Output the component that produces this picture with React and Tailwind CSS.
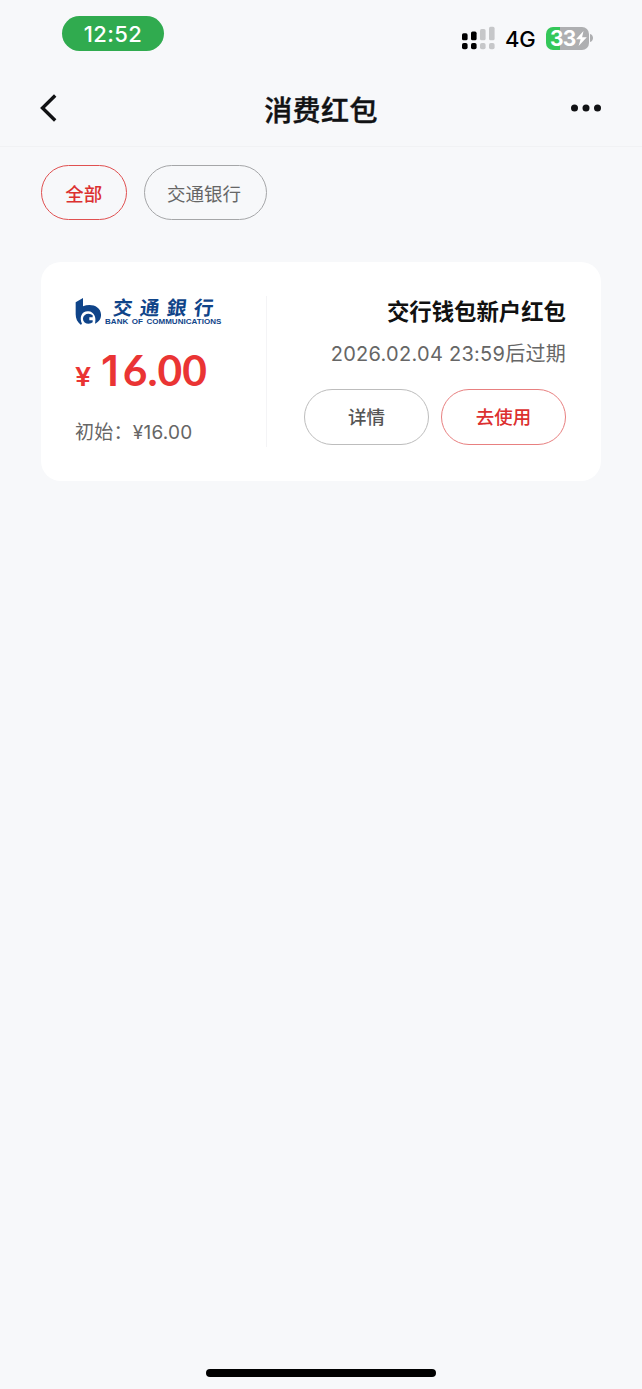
function StatusBar() {
  return (
    <div className="flex h-[73px] items-start justify-between pl-[62px] pr-[49px]">
      <div className="mt-4 flex h-[35px] w-[102px] items-center justify-center rounded-full bg-[#30ab4f] text-[22px] font-medium leading-none tracking-[0.4px] text-white">
        12:52
      </div>
      <div className="mt-[26px] flex h-6 items-center">
        <svg width="33" height="24" viewBox="0 0 33 24">
          <rect x="0" y="7.3" width="5.6" height="7" rx="1.6" />
          <rect x="9" y="5.6" width="5.6" height="8.7" rx="1.6" />
          <rect x="18" y="3.1" width="5.6" height="11.2" rx="1.6" fill="#c6c7c9" />
          <rect x="27" y="0.8" width="5.6" height="13.5" rx="1.6" fill="#c6c7c9" />
          <rect x="0" y="17" width="5.6" height="6.2" rx="1.8" />
          <rect x="9" y="17" width="5.6" height="6.2" rx="1.8" />
          <rect x="18" y="17" width="5.6" height="6.2" rx="1.8" fill="#c6c7c9" />
          <rect x="27" y="17" width="5.6" height="6.2" rx="1.8" fill="#c6c7c9" />
        </svg>
        <span className="ml-[10px] mt-[2px] w-[31px] text-[22px] font-medium leading-6 tracking-[-0.2px] text-black">4G</span>
        <div className="ml-[10px] flex items-center">
          <div className="flex h-[23px] w-[43px] items-center overflow-hidden rounded-[7px] bg-[linear-gradient(to_right,#34c759_14px,#aeafb1_14px)] pl-[4px] text-[21px] font-bold leading-none text-white">
            <span className="tracking-[-0.9px]">33</span>
            <svg className="ml-px" width="11" height="15" viewBox="0 0 11 15" fill="white">
              <path d="M7.5 0 0 8.3h4.6L2.6 15 10.8 6.3H6.1z" />
            </svg>
          </div>
          <svg className="ml-px" width="3" height="8" viewBox="0 0 3 8" fill="#aeafb1">
            <path d="M0 0c4 1 4 7 0 8z" />
          </svg>
        </div>
      </div>
    </div>
  );
}

function NavBar() {
  return (
    <header className="flex h-[74px] items-center justify-between border-b border-[#f1f2f4] px-10">
      <svg className="mb-[3px]" width="36" height="28" viewBox="0 0 36 28" fill="none" stroke="#111214" strokeWidth="3.4">
        <path d="M15.2 1.5 2.5 14 15.2 26.5" />
      </svg>
      <h1 className="mt-[2px] text-[28px] font-medium leading-8 tracking-[0.4px] text-[#111214] [-webkit-text-stroke:0.4px_#111214]">消费红包</h1>
      <svg className="mb-[3px]" width="36" height="8" viewBox="0 0 36 8" fill="#111214">
        <circle cx="8.5" cy="4" r="3.5" />
        <circle cx="20" cy="4" r="3.5" />
        <circle cx="31.5" cy="4" r="3.5" />
      </svg>
    </header>
  );
}

function BankLogo() {
  return (
    <div className="flex h-[30px] items-start text-[#0f4489]">
      <svg className="mt-[2px]" width="27" height="28" viewBox="0 0 81 84" fill="currentColor">
        <path d="M2 13 24 0V25C47 15 77 24 78 49 79 62 72 72 60 77 65 58 57 41 40 40 20 39 12 58 21 78L17 80C7 73 2 62 2 49Z" />
        <path d="M53 52A17 15 0 1 0 53 73V67H43V58H53Z" />
      </svg>
      <div className="ml-[3px] mt-[2px] flex w-[118px] flex-col">
        <div className="flex h-[20px] -skew-x-6 items-center gap-[7.5px] pl-[8px] pt-[2px] text-[19.5px] font-bold leading-none">
          <span>交</span><span>通</span><span>銀</span><span>行</span>
        </div>
        <span className="whitespace-nowrap font-['Liberation_Sans'] text-[8px] font-bold leading-[8px] tracking-[0.04px] [word-spacing:1.2px]">BANK OF COMMUNICATIONS</span>
      </div>
    </div>
  );
}

function Coupon() {
  return (
    <section className="mx-[41px] mt-[42px] flex h-[219px] rounded-[20px] bg-white pl-[34px] pr-[35px] pt-[34px]">
      <div className="h-[151px] w-[192px] border-r border-[#f4f4f6]">
        <BankLogo />
        <div className="mt-[20px] flex h-12 items-baseline font-semibold text-[#ea3434]">
          <span className="w-[16px] origin-left scale-x-110 text-[26px] leading-[46px]">¥</span>
          <span className="ml-[10px] text-[42px] leading-[48px]">1</span>
          <span className="ml-[4px] font-[Lato] text-[42.5px] font-bold leading-[48px]">6.00</span>
        </div>
        <p className="mt-[25px] whitespace-nowrap text-[19px] leading-7 tracking-[0.25px] text-[#666]">初始：¥16.00</p>
      </div>
      <div className="flex flex-1 flex-col items-end">
        <h2 className="whitespace-nowrap text-[22.4px] font-bold leading-8 text-[#111]">交行钱包新户红包</h2>
        <p className="mt-[12px] whitespace-nowrap text-[20px] leading-7 tracking-[0.27px] text-[#666]">2026.02.04 23:59后过期</p>
        <div className="mt-[21px] flex gap-3">
          <button className="h-14 w-[125px] rounded-full border border-[#bdbdbd] pt-px text-[18.5px] font-medium text-[#555]">详情</button>
          <button className="h-14 w-[125px] rounded-full border border-[#e88080] pt-px text-[18.5px] font-medium text-[#dc3030]">去使用</button>
        </div>
      </div>
    </section>
  );
}

export default function App() {
  return (
    <main className="flex h-[1389px] w-[642px] flex-col overflow-hidden bg-[#f7f8fa] font-[Inter,'Noto_Sans_CJK_SC',sans-serif]">
      <StatusBar />
      <NavBar />
      <nav className="mt-[18px] flex gap-[17px] pl-[41px]">
        <button className="h-[55px] w-[85.5px] rounded-full border border-[#e05050] pt-[5px] text-[18.5px] font-medium text-[#dc3030]">全部</button>
        <button className="h-[55px] w-[123px] rounded-full border border-[#a5a6a8] pr-[2px] pt-[5px] text-[18.5px] text-[#666]">交通银行</button>
      </nav>
      <Coupon />
      <div className="mx-auto mb-3 mt-auto h-2 w-[230px] rounded-full bg-black" />
    </main>
  );
}
